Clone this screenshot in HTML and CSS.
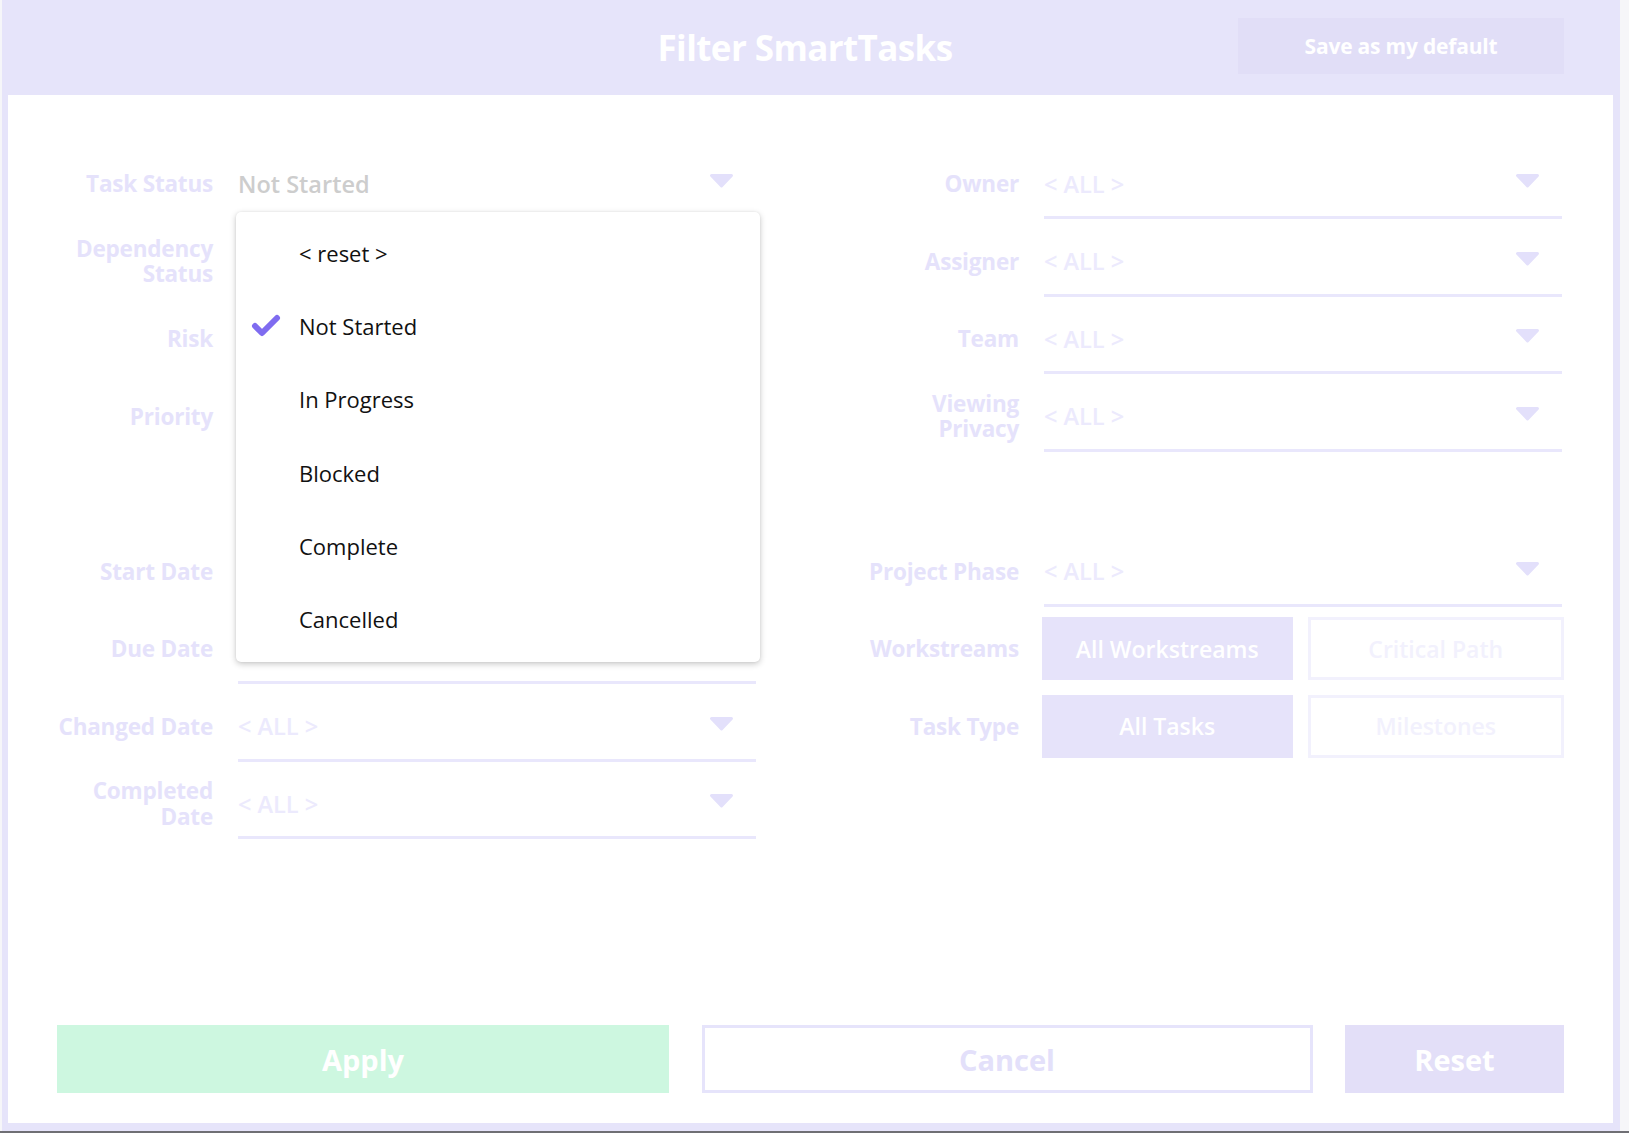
FILE: index.html
```html
<!DOCTYPE html>
<html lang="en">
<head>
<meta charset="utf-8">
<title>Filter SmartTasks</title>
<link rel="stylesheet" href="styles.css">
</head>
<body>
<div class="modal">
  <header class="modal-header">
    <h1 class="title">Filter SmartTasks</h1>
    <button class="save-default">Save as my default</button>
  </header>
  <main class="content">
    <div class="form">
      <div class="block block-left">
        <div class="label">Task Status</div>
        <div class="field field-anchor">
          <span class="value value-selected">Not Started</span>
          <svg class="arrow" viewBox="0 0 25 15"><path d="M2.5 2.5 H22.5 L12.5 13 Z"/></svg>
          <div class="menu">
            <div class="menu-item"><span class="check-slot"></span><span>&lt; reset &gt;</span></div>
            <div class="menu-item"><span class="check-slot"><svg class="check" viewBox="0 0 30 24"><path d="M4 12 L11 19 L26 4"/></svg></span><span>Not Started</span></div>
            <div class="menu-item"><span class="check-slot"></span><span>In Progress</span></div>
            <div class="menu-item"><span class="check-slot"></span><span>Blocked</span></div>
            <div class="menu-item"><span class="check-slot"></span><span>Complete</span></div>
            <div class="menu-item"><span class="check-slot"></span><span>Cancelled</span></div>
          </div>
        </div>

        <div class="label">Dependency<br>Status</div>
        <div class="field"><span class="value">&lt; ALL &gt;</span><svg class="arrow" viewBox="0 0 25 15"><path d="M2.5 2.5 H22.5 L12.5 13 Z"/></svg></div>

        <div class="label">Risk</div>
        <div class="field"><span class="value">&lt; ALL &gt;</span><svg class="arrow" viewBox="0 0 25 15"><path d="M2.5 2.5 H22.5 L12.5 13 Z"/></svg></div>

        <div class="label">Priority</div>
        <div class="field"><span class="value">&lt; ALL &gt;</span><svg class="arrow" viewBox="0 0 25 15"><path d="M2.5 2.5 H22.5 L12.5 13 Z"/></svg></div>

        <div class="label"></div>
        <div class="spacer"></div>

        <div class="label">Start Date</div>
        <div class="field"><span class="value">&lt; ALL &gt;</span><svg class="arrow" viewBox="0 0 25 15"><path d="M2.5 2.5 H22.5 L12.5 13 Z"/></svg></div>

        <div class="label">Due Date</div>
        <div class="field"><span class="value">&lt; ALL &gt;</span><svg class="arrow" viewBox="0 0 25 15"><path d="M2.5 2.5 H22.5 L12.5 13 Z"/></svg></div>

        <div class="label">Changed Date</div>
        <div class="field"><span class="value">&lt; ALL &gt;</span><svg class="arrow" viewBox="0 0 25 15"><path d="M2.5 2.5 H22.5 L12.5 13 Z"/></svg></div>

        <div class="label">Completed<br>Date</div>
        <div class="field"><span class="value">&lt; ALL &gt;</span><svg class="arrow" viewBox="0 0 25 15"><path d="M2.5 2.5 H22.5 L12.5 13 Z"/></svg></div>
      </div>

      <div class="block block-right">
        <div class="label">Owner</div>
        <div class="field"><span class="value">&lt; ALL &gt;</span><svg class="arrow" viewBox="0 0 25 15"><path d="M2.5 2.5 H22.5 L12.5 13 Z"/></svg></div>

        <div class="label">Assigner</div>
        <div class="field"><span class="value">&lt; ALL &gt;</span><svg class="arrow" viewBox="0 0 25 15"><path d="M2.5 2.5 H22.5 L12.5 13 Z"/></svg></div>

        <div class="label">Team</div>
        <div class="field"><span class="value">&lt; ALL &gt;</span><svg class="arrow" viewBox="0 0 25 15"><path d="M2.5 2.5 H22.5 L12.5 13 Z"/></svg></div>

        <div class="label">Viewing<br>Privacy</div>
        <div class="field"><span class="value">&lt; ALL &gt;</span><svg class="arrow" viewBox="0 0 25 15"><path d="M2.5 2.5 H22.5 L12.5 13 Z"/></svg></div>

        <div class="label"></div>
        <div class="spacer"></div>

        <div class="label">Project Phase</div>
        <div class="field"><span class="value">&lt; ALL &gt;</span><svg class="arrow" viewBox="0 0 25 15"><path d="M2.5 2.5 H22.5 L12.5 13 Z"/></svg></div>

        <div class="label">Workstreams</div>
        <div class="toggle-group">
          <button class="toggle toggle-on">All Workstreams</button>
          <button class="toggle toggle-off">Critical Path</button>
        </div>

        <div class="label">Task Type</div>
        <div class="toggle-group">
          <button class="toggle toggle-on">All Tasks</button>
          <button class="toggle toggle-off">Milestones</button>
        </div>
      </div>
    </div>

    <footer class="actions">
      <button class="btn btn-apply">Apply</button>
      <button class="btn btn-cancel">Cancel</button>
      <button class="btn btn-reset">Reset</button>
    </footer>
  </main>
</div>
<div class="bottom-line"></div>
</body>
</html>
```

FILE: styles.css
```css
* {
  box-sizing: border-box;
}

html, body {
  margin: 0;
  padding: 0;
}

body {
  width: 1629px;
  height: 1133px;
  overflow: hidden;
  background: #f6f6f9;
  font-family: "Open Sans", "Noto Sans", sans-serif;
  display: flex;
  flex-direction: column;
}

.modal {
  margin-left: 2px;
  width: 1618px;
  height: 1131px;
  background: #e6e4fa;
  display: flex;
  flex-direction: column;
}

.bottom-line {
  height: 2px;
  background: #6f6f74;
}

.modal-header {
  height: 95px;
  flex: none;
  display: flex;
  align-items: center;
  justify-content: center;
  position: relative;
}

.title {
  margin: 0 0 0 -12px;
  font-size: 35px;
  font-weight: 700;
  color: #ffffff;
  letter-spacing: -0.6px;
}

.save-default {
  position: absolute;
  right: 56px;
  top: 18px;
  width: 326px;
  height: 56px;
  border: none;
  background: #e1def7;
  color: #ffffff;
  font-family: inherit;
  font-size: 21px;
  font-weight: 700;
  letter-spacing: -0.2px;
  padding: 0;
}

.content {
  flex: 1;
  margin: 0 7px 8px 6px;
  background: #ffffff;
  display: flex;
  flex-direction: column;
}

.form {
  display: flex;
  padding-top: 50px;
  flex: 1;
}

.block {
  display: grid;
  grid-auto-rows: 77.5px;
  column-gap: 25px;
  align-content: start;
}

.block-left {
  grid-template-columns: 205px 518px;
  width: 748px;
}

.block-right {
  grid-template-columns: 263px 518px;
}

.label {
  align-self: center;
  text-align: right;
  font-size: 22.5px;
  font-weight: 700;
  line-height: 25.5px;
  letter-spacing: -0.2px;
  color: #e5e2fb;
}

.field {
  position: relative;
  height: 74px;
  padding-top: 6px;
  border-bottom: 3px solid #e9e7fc;
  display: flex;
  align-items: center;
  justify-content: space-between;
}

.spacer {
  height: 74px;
}

.value {
  font-size: 23.5px;
  font-weight: 600;
  color: #eceafd;
}

.value-selected {
  color: #cdcdcd;
}

.arrow {
  width: 25px;
  height: 15px;
  margin-right: 22px;
  margin-top: -6px;
  fill: #e3e0fb;
  stroke: #e3e0fb;
  stroke-width: 3;
  stroke-linejoin: round;
}

.menu {
  position: absolute;
  top: 67px;
  left: -2px;
  width: 524px;
  padding: 4px 0 6px;
  background: #ffffff;
  border-radius: 5px;
  box-shadow: 0 2px 6px rgba(0, 0, 0, 0.22), 0 0 2px rgba(0, 0, 0, 0.08);
  z-index: 5;
}

.menu-item {
  height: 73.3px;
  display: flex;
  align-items: center;
  padding-left: 15px;
  font-size: 22px;
  color: #111111;
}

.check-slot {
  width: 48px;
  display: flex;
  align-items: center;
}

.check {
  width: 30px;
  height: 24px;
  fill: none;
  stroke: #7f6cf0;
  stroke-width: 6;
  stroke-linecap: round;
  stroke-linejoin: round;
}

.toggle-group {
  display: flex;
  gap: 15px;
  margin: 7px -2px 0 -2px;
  height: 63px;
}

.toggle {
  flex: 1;
  font-family: inherit;
  font-size: 23px;
  font-weight: 600;
  padding: 0;
}

.toggle-on {
  background: #e6e3fa;
  border: none;
  color: #ffffff;
}

.toggle-off {
  background: #ffffff;
  border: 3px solid #f2f1fd;
  color: #f2f1fd;
}

.actions {
  display: flex;
  padding: 0 49px 30px 49px;
  gap: 32.5px;
}

.btn {
  height: 68px;
  font-family: inherit;
  font-size: 29px;
  font-weight: 700;
  padding: 0;
}

.btn-apply {
  width: 612px;
  background: #cdf7e0;
  border: none;
  color: #ffffff;
}

.btn-cancel {
  width: 611px;
  background: #ffffff;
  border: 3px solid #e6e4fb;
  color: #e3e0fa;
}

.btn-reset {
  width: 219px;
  background: #e3dff8;
  border: none;
  color: #ffffff;
}
```
